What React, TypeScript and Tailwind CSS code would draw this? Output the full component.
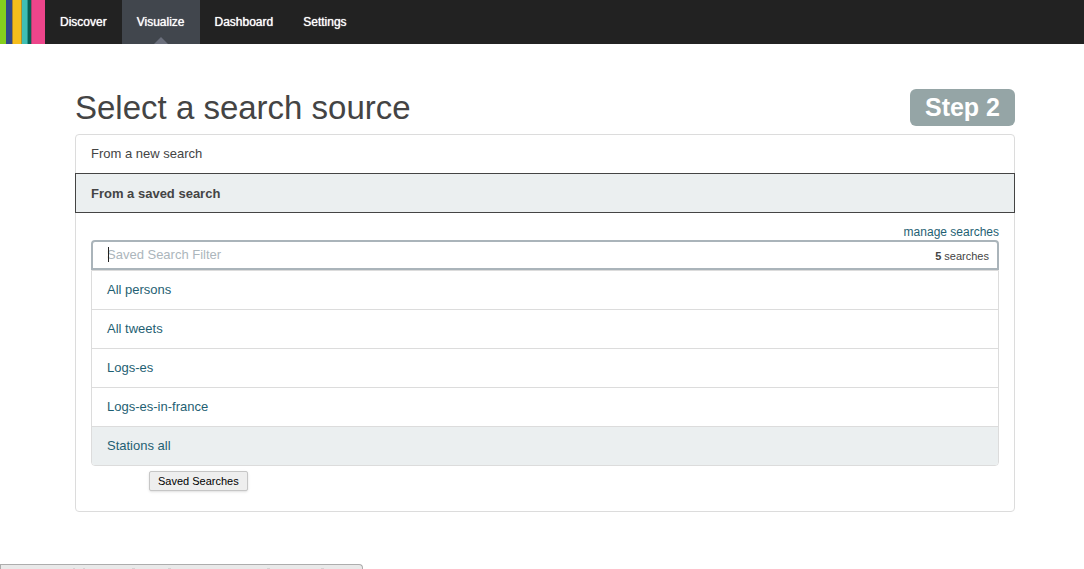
import React from 'react';

const NAV = [
  { label: 'Discover', active: false },
  { label: 'Visualize', active: true },
  { label: 'Dashboard', active: false },
  { label: 'Settings', active: false },
];

const SEARCHES = ['All persons', 'All tweets', 'Logs-es', 'Logs-es-in-france', 'Stations all'];

function Logo() {
  return (
    <svg width="45" height="44" viewBox="0 0 45 44" shapeRendering="crispEdges" role="img" aria-label="Kibana" className="block shrink-0">
      <rect x="0" width="6" height="44" fill="#85ce1e" />
      <rect x="6" width="6" height="44" fill="#30478a" />
      <rect x="12" width="1" height="44" fill="#a98431" />
      <rect x="13" width="8" height="44" fill="#f5bd1c" />
      <rect x="21" width="1" height="44" fill="#a9922f" />
      <rect x="22" width="5" height="44" fill="#3fbfb4" />
      <rect x="27" width="1" height="44" fill="#27958a" />
      <rect x="28" width="3" height="44" fill="#066054" />
      <rect x="31" width="1" height="44" fill="#a9446f" />
      <rect x="32" width="13" height="44" fill="#ed458b" />
    </svg>
  );
}

function NavBar() {
  return (
    <header className="flex h-11 bg-[#222222]">
      <Logo />
      <nav className="flex">
        {NAV.map(({ label, active }) => (
          <a
            key={label}
            href="#"
            aria-current={active ? 'page' : undefined}
            className={
              active
                ? 'relative flex items-center bg-[#41464d] px-[15px] text-[12px] text-white [text-shadow:0_0_1px_#ffffff]'
                : 'relative flex items-center px-[15px] text-[12px] text-white [text-shadow:0_0_1px_#ffffff]'
            }
          >
            {label}
            {active && (
              <svg width="14" height="7" viewBox="0 0 14 7" aria-hidden="true" className="absolute bottom-0 left-1/2 -translate-x-1/2">
                <path d="M0 7 7 0l7 7z" fill="#6b6f7c" />
              </svg>
            )}
          </a>
        ))}
      </nav>
    </header>
  );
}

function SavedSearches() {
  return (
    <div className="px-[15px] pt-[11px] pb-[45px]">
      <div className="flex h-4 items-center justify-end text-[12px]">
        <a href="#" className="text-[#1f5f73]">manage searches</a>
      </div>
      <div className="relative flex h-[30px] items-center rounded-t border-2 border-[#aab4ba] pr-2 pb-px pl-[14px]">
        <input
          id="saved-search-filter"
          type="text"
          aria-label="Saved Search Filter"
          placeholder="Saved Search Filter"
          className="min-w-0 flex-1 bg-transparent text-[13px] text-[#444444] outline-none placeholder:text-[#acb6bc]"
        />
        <span aria-hidden="true" className="absolute top-[5px] left-[15px] h-[15px] w-px bg-[#222222]" />
        <label htmlFor="saved-search-filter" className="pt-[3px] text-[11px] text-[#444444]">
          <strong>5</strong> searches
        </label>
      </div>
      <div className="relative">
        <ul className="overflow-hidden rounded-b border border-[#dcdcdc]">
          {SEARCHES.map((name) => (
            <li key={name} className="border-b border-[#dcdcdc] last:border-b-0 last:bg-[#ebeff0]">
              <a href="#" className="flex h-[38px] items-center px-[15px] text-[13px] text-[#1f5f73]">
                {name}
              </a>
            </li>
          ))}
        </ul>
        <div role="tooltip" className="absolute top-full left-[58px] mt-[5px] flex h-5 items-center rounded-xs border border-[#c6c6c6] bg-[#eeeeee] px-2 text-[11px] whitespace-nowrap text-black shadow-sm">
          Saved Searches
        </div>
      </div>
    </div>
  );
}

function StatusBubble() {
  return (
    <div aria-hidden="true" className="fixed bottom-0 left-0 h-[5px] w-[363px] overflow-hidden rounded-tr border-t border-r border-l border-[#adadad] bg-[#e9e9e9]">
      <svg width="360" height="4" viewBox="0 0 360 4" className="block">
        <path d="M72 3h2M82 3h2M131 3h3M167 3h3M266 3h3M320 3h3" transform="translate(0 .5)" stroke="#d3d3d3" />
      </svg>
    </div>
  );
}

export default function App() {
  return (
    <div className="bg-white font-['Liberation_Sans',Arial,sans-serif] text-[#444444]">
      <NavBar />
      <main className="pt-[45px] pr-[69px] pl-[75px]">
        <div className="mb-2 flex h-[37px] items-center justify-between">
          <h1 className="text-[33px] leading-[37px]">Select a search source</h1>
          <span className="flex h-[37px] items-center rounded-md bg-[#95a5a6] px-[15px] text-[25px] leading-none font-bold text-white">
            Step 2
          </span>
        </div>
        <section className="rounded border border-[#dcdcdc]">
          <button type="button" className="flex h-[38px] w-full items-center px-[15px] text-left text-[13px]">
            From a new search
          </button>
          <div className="-mx-px flex">
            <button type="button" aria-expanded="true" className="flex h-10 flex-1 items-center border border-[#444444] bg-[#ebeff0] px-[15px] pt-px text-left text-[13px] font-bold">
              From a saved search
            </button>
          </div>
          <SavedSearches />
        </section>
      </main>
      <StatusBubble />
    </div>
  );
}
